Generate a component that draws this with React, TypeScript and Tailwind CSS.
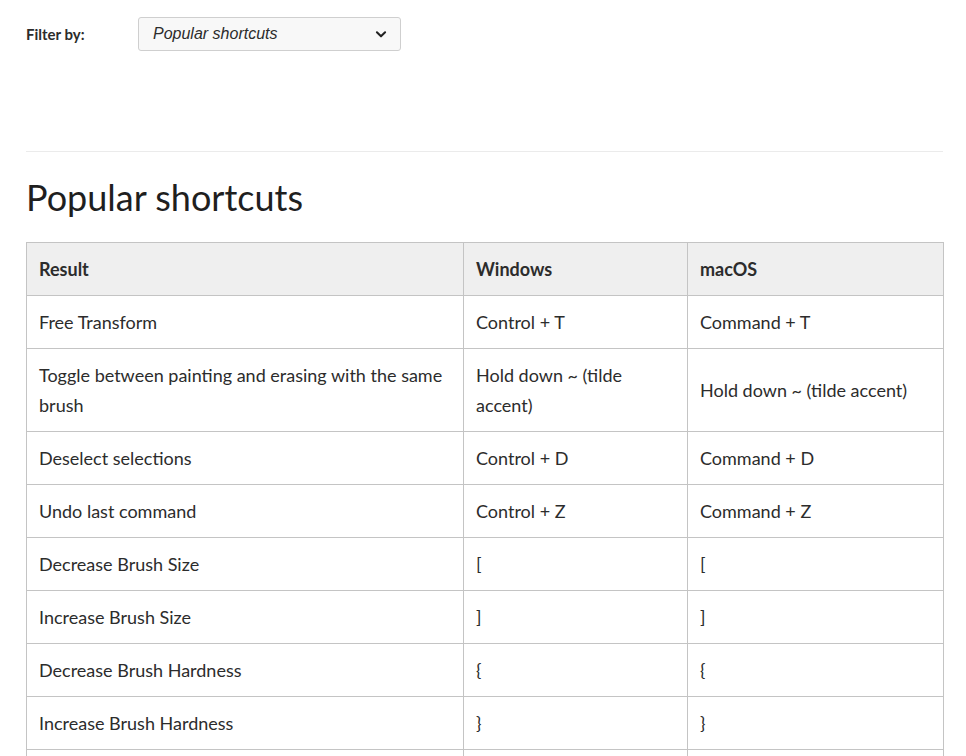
import React from 'react'

const rows: [string, string, string][] = [
  ['Free Transform', 'Control + T', 'Command + T'],
  ['Toggle between painting and erasing with the same brush', 'Hold down ~ (tilde accent)', 'Hold down ~ (tilde accent)'],
  ['Deselect selections', 'Control + D', 'Command + D'],
  ['Undo last command', 'Control + Z', 'Command + Z'],
  ['Decrease Brush Size', '[', '['],
  ['Increase Brush Size', ']', ']'],
  ['Decrease Brush Hardness', '{', '{'],
  ['Increase Brush Hardness', '}', '}'],
]

export default function App() {
  return (
    <div className="h-[756px] overflow-hidden bg-white px-[26px] text-[#2c2c2c]" style={{ fontFamily: 'Lato, "Noto Sans", sans-serif' }}>
      <div className="flex items-center pt-[17px]">
        <span className="w-[112px] text-[15px] font-bold">Filter by:</span>
        <div className="flex h-[34px] w-[263px] items-center justify-between rounded-[3px] border border-[#cfcfcf] bg-[#f8f8f8] pl-[14px] pr-[12px]">
          <span className="text-[16px] italic" style={{ fontFamily: '"Liberation Sans", Arial, sans-serif' }}>Popular shortcuts</span>
          <svg width="14" height="14" viewBox="0 0 24 24" fill="none" stroke="#222" strokeWidth="3.5" strokeLinecap="round" strokeLinejoin="round">
            <path d="M5 9l7 7 7-7" />
          </svg>
        </div>
      </div>
      <div className="mt-[100px] w-[917px] border-t border-[#ebebeb]" />
      <h1 className="mt-[21px] text-[36px] leading-[48px] text-[#1f1f1f]">Popular shortcuts</h1>
      <table className="mt-[21px] w-[917px] table-fixed border-collapse text-[18px]">
        <colgroup>
          <col className="w-[437px]" />
          <col className="w-[224px]" />
          <col className="w-[256px]" />
        </colgroup>
        <thead>
          <tr className="bg-[#efefef]">
            {['Result', 'Windows', 'macOS'].map(h => (
              <th key={h} className="border border-[#c4c4c4] px-[12px] py-[11px] text-left font-bold leading-[30px]">{h}</th>
            ))}
          </tr>
        </thead>
        <tbody>
          {rows.map(r => (
            <tr key={r[0]}>
              {r.map((c, i) => (
                <td key={i} className="border border-[#c4c4c4] px-[12px] py-[11px] align-middle leading-[30px]">{c}</td>
              ))}
            </tr>
          ))}
          <tr>
            <td className="h-[53px] border border-[#c4c4c4]" />
            <td className="border border-[#c4c4c4]" />
            <td className="border border-[#c4c4c4]" />
          </tr>
        </tbody>
      </table>
    </div>
  )
}
